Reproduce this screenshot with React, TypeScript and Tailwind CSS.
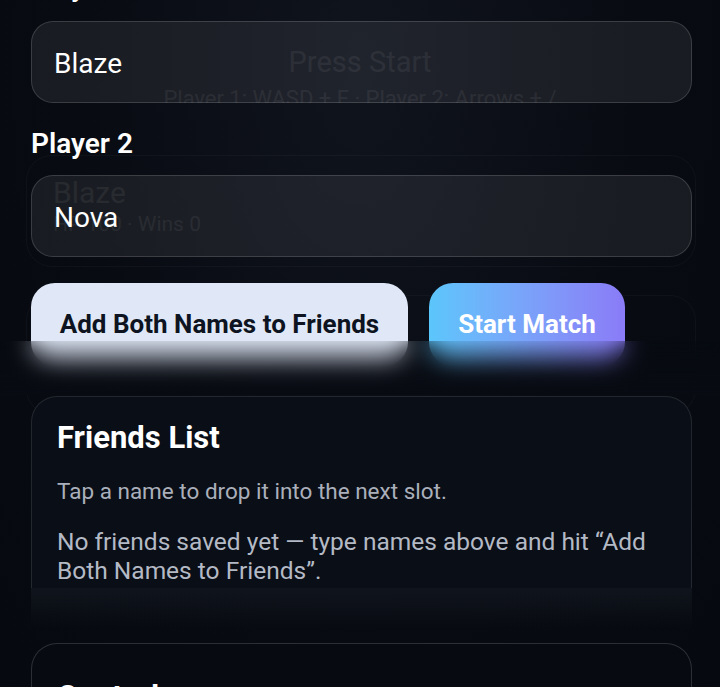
import React from "react";

const font = { fontFamily: "Roboto, 'Noto Sans', sans-serif" };

const Ghost = () => (
  // faint leftover frame of the lobby screen that shows through the form
  <div className="pointer-events-none absolute inset-x-0 top-0 h-[340px] opacity-[0.06]">
    <div className="absolute inset-x-0 top-[41px] text-center text-[29px] text-white">Press Start</div>
    <div className="absolute inset-x-0 top-[84px] h-[19px] overflow-hidden text-center text-[22px] leading-[30px] text-white">
      Player 1: WASD + F · Player 2: Arrows + /
    </div>
    <div className="absolute left-[26px] right-[24px] top-[155px] h-[112px] rounded-[26px] border border-white/50 px-[26px] pt-[19px]">
      <div className="text-[30px] leading-[36px] text-white">Blaze</div>
      <div className="text-[21px] leading-[26px] text-white">HP 100 · Wins 0</div>
    </div>
    <div className="absolute left-[26px] right-[24px] top-[295px] h-[120px] rounded-[26px] border border-white/50" />
  </div>
);

const NameInput = ({ value }: { value: string }) => (
  <div className="flex h-[82px] items-center rounded-[22px] border border-white/15 bg-white/[0.07] px-[22px] pt-[3px]">
    <input
      readOnly
      value={value}
      className="w-full bg-transparent text-[28px] leading-[34px] text-white outline-none"
      style={font}
    />
  </div>
);

export default function App() {
  return (
    <div
      className="relative h-[687px] w-[720px] overflow-hidden bg-[radial-gradient(ellipse_at_50%_10%,#10141d_0%,#080b12_55%,#06090f_100%)]"
      style={font}
    >
      <Ghost />
      <div className="relative pl-[31px] pr-[28px]">
        <div className="-mt-[30px] text-[28px] font-semibold leading-[34px] text-white">Player 1</div>
        <div className="mt-[17px]">
          <NameInput value="Blaze" />
        </div>
        <div className="mt-[24px] text-[28px] font-semibold leading-[34px] text-white">Player 2</div>
        <div className="mt-[14px]">
          <NameInput value="Nova" />
        </div>
        <div className="mt-[26px] flex gap-[21px]">
          <button className="h-[83px] w-[377px] rounded-[24px] bg-[#e0e8f7] text-[26px] font-bold text-[#0d1320]">
            Add Both Names to Friends
          </button>
          <button className="h-[83px] w-[196px] rounded-[24px] bg-gradient-to-r from-[#5bc6fb] to-[#8a7bf7] text-[26px] font-bold text-white">
            Start Match
          </button>
        </div>

        <div className="mt-[30px] h-[192px] overflow-hidden rounded-t-[26px] border-x border-t border-white/10 bg-[#0a0e16] px-[25px] pt-[22px]">
          <h2 className="text-[31px] font-bold leading-[38px] text-white">Friends List</h2>
          <p className="mt-[19px] text-[22.5px] leading-[30px] text-[#aab0bb]">
            Tap a name to drop it into the next slot.
          </p>
          <p className="mt-[21px] text-[24.5px] leading-[29px] text-[#b4bac5]">
            No friends saved yet — type names above and hit “Add Both Names to Friends”.
          </p>
        </div>
        <div className="h-[40px] bg-gradient-to-b from-[#10141c] to-transparent" />

        <div className="mt-[15px] h-[120px] rounded-t-[26px] border-x border-t border-white/15 bg-[#070a11] px-[25px] pt-[34px]">
          <h2 className="text-[31px] font-bold leading-[38px] text-white">Controls</h2>
        </div>
      </div>

      <div className="pointer-events-none absolute inset-x-0 top-[341px] h-[54px] bg-gradient-to-b from-[#0a0d14]/10 to-[#080b12] backdrop-blur-md" />
    </div>
  );
}
